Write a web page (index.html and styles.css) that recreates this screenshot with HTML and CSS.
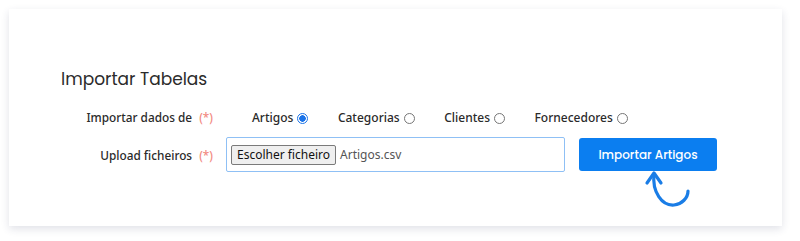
FILE: index.html
```html
<!DOCTYPE html>
<html lang="pt">
<head>
<meta charset="utf-8">
<link rel="stylesheet" href="styles.css">
</head>
<body>
<div class="card">
  <h2 class="title">Importar Tabelas</h2>
  <div class="form">
    <div class="label">Importar dados de <span class="req">(*)</span></div>
    <div class="radios">
      <label class="opt">Artigos <span class="radio checked"></span></label>
      <label class="opt">Categorias <span class="radio"></span></label>
      <label class="opt">Clientes <span class="radio"></span></label>
      <label class="opt">Fornecedores <span class="radio"></span></label>
    </div>
    <div class="label">Upload ficheiros <span class="req">(*)</span></div>
    <div class="uploadrow">
      <div class="file"><span class="filebtn">Escolher ficheiro</span><span class="filename">Artigos.csv</span></div>
      <div class="btnwrap">
        <button class="primary">Importar Artigos</button>
        <svg class="arrow" width="50" height="45" viewBox="0 0 50 45">
          <path d="M12 6 C10 24 20 38 32 37 C40 36 46 30 46 23" fill="none" stroke="#1a7de6" stroke-width="3.2" stroke-linecap="round"/>
          <path d="M5 15 L12 5 L19 15" fill="none" stroke="#1a7de6" stroke-width="3.2" stroke-linecap="round" stroke-linejoin="round"/>
        </svg>
      </div>
    </div>
  </div>
</div>
</body>
</html>
```
FILE: styles.css
```css
html, body { margin: 0; padding: 0; background: #fff; }
body { padding: 9px 18px 15px 9px; font-family: "Noto Sans", "Open Sans", sans-serif; }
.card {
  width: 773px;
  height: 217px;
  box-sizing: border-box;
  background: #fff;
  box-shadow: 0 3px 8px rgba(40, 50, 90, 0.14);
  padding: 58px 0 0 52px;
}
.title {
  margin: 0;
  font-family: "Poppins", "Lato", "Open Sans", sans-serif;
  font-weight: 400;
  font-size: 17px;
  line-height: 24px;
  color: #2b2b2b;
}
.form {
  display: grid;
  grid-template-columns: 152px auto;
  row-gap: 8px;
  margin-top: 14px;
  align-items: center;
}
.label {
  text-align: right;
  font-size: 11.8px;
  font-weight: 500;
  color: #2a2a2a;
  white-space: nowrap;
}
.req { color: #f28b82; margin-left: 4px; }
.radios { display: flex; gap: 29.5px; padding-left: 39px; height: 24px; align-items: center; }
.opt { display: flex; align-items: center; gap: 4px; font-size: 12px; font-weight: 500; color: #2a2a2a; }
.radio {
  width: 11px; height: 11px; box-sizing: border-box;
  border: 1px solid #767676; border-radius: 50%;
  display: inline-block; position: relative; top: 1px;
}
.radio.checked { border: 1.5px solid #1a73e8; background: radial-gradient(circle, #1a73e8 0 3px, #fff 3.5px); }
.uploadrow { display: flex; align-items: center; gap: 14px; padding-left: 13px; }
.file {
  width: 339px; height: 35px; box-sizing: border-box;
  border: 1px solid #8fc0f5; border-radius: 2px;
  display: flex; align-items: center; padding-left: 4px;
  font-size: 12px; color: #555;
}
.filebtn {
  border: 1px solid #7a7a7a; border-radius: 2px; background: #efefef;
  padding: 0 5px; height: 20px; line-height: 18px; box-sizing: border-box; color: #111;
  margin-right: 4px;
}
.btnwrap { position: relative; }
.primary {
  width: 138px; height: 33px; border: none; border-radius: 3px;
  background: #0b7ef0; color: #fff;
  font-family: "Poppins", "Open Sans", sans-serif; font-size: 12px; font-weight: 500;
  display: block; padding: 0;
}
.arrow { position: absolute; left: 63px; top: 30px; }
```
